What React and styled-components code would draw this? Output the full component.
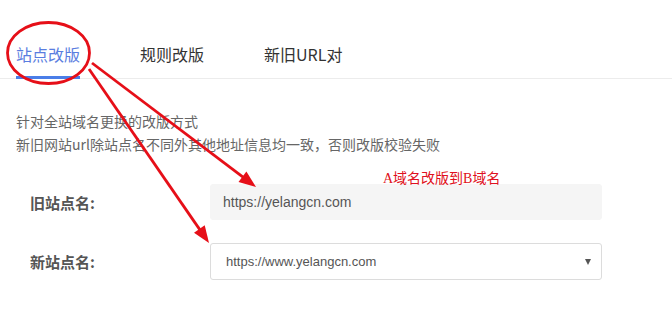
import React from "react";
import styled, { createGlobalStyle } from "styled-components";

const Global = createGlobalStyle`
  html, body { margin: 0; padding: 0; background: #fff; }
  body { font-family: "Noto Sans CJK SC", "Noto Sans", sans-serif; }
  * { box-sizing: border-box; }
`;

const Page = styled.div`
  position: relative;
  width: 672px;
  height: 325px;
  overflow: hidden;
  background: #fff;
`;

const TabBar = styled.div`
  display: flex;
  gap: 60px;
  height: 79px;
  padding-left: 16px;
  border-bottom: 1px solid #ececec;
`;

const Tab = styled.div`
  display: flex;
  align-items: flex-end;
  padding-bottom: 11px;
  font-size: 16px;
  line-height: 22px;
  color: ${(p) => (p.$active ? "#5a7de0" : "#333")};
  border-bottom: 3px solid ${(p) => (p.$active ? "#4a7ee8" : "transparent")};
  margin-bottom: -1px;
`;

const Intro = styled.div`
  padding: 31px 0 0 16px;
  font-size: 14px;
  line-height: 23px;
  color: #666;
`;

const Form = styled.div`
  display: grid;
  grid-template-columns: 180px 392px;
  row-gap: 23px;
  align-items: center;
  padding: 28px 0 0 30px;
`;

const Label = styled.div`
  font-size: 15px;
  font-weight: 700;
  color: #555;
`;

const Field = styled.div`
  display: flex;
  align-items: center;
  justify-content: space-between;
  height: ${(p) => (p.$select ? "37px" : "36px")};
  padding-left: ${(p) => (p.$select ? "15px" : "12px")};
  padding-right: 10px;
  background: ${(p) => (p.$select ? "#fff" : "#f5f5f5")};
  border: 1px solid ${(p) => (p.$select ? "#dcdcdc" : "#f5f5f5")};
  border-radius: 3px;
  font-family: "Liberation Sans", Arial, sans-serif;
  font-size: ${(p) => (p.$select ? "13px" : "14px")};
  color: #555;
`;

const Caret = styled.span`
  width: 0;
  height: 0;
  border-left: 3.5px solid transparent;
  border-right: 3.5px solid transparent;
  border-top: 6px solid #555;
  margin-top: 1px;
`;

const Note = styled.div`
  position: absolute;
  left: 383px;
  top: 169px;
  font-family: "Liberation Serif", "Noto Sans CJK SC", serif;
  font-size: 14px;
  line-height: 20px;
  color: #e01020;
`;

const Overlay = styled.svg`
  position: absolute;
  left: 0;
  top: 0;
  pointer-events: none;
`;

function Arrow({ x1, y1, x2, y2 }) {
  const dx = x2 - x1;
  const dy = y2 - y1;
  const len = Math.hypot(dx, dy);
  const ux = dx / len;
  const uy = dy / len;
  const nx = -uy;
  const ny = ux;
  const hl = 17;
  const hw = 6.5;
  const bx = x2 - hl * ux;
  const by = y2 - hl * uy;
  const pts = `${x2},${y2} ${bx + hw * nx},${by + hw * ny} ${bx - hw * nx},${by - hw * ny}`;
  return (
    <g>
      <line x1={x1} y1={y1} x2={bx + ux * 2} y2={by + uy * 2} stroke="#e60f18" strokeWidth="2.8" />
      <polygon points={pts} fill="#e60f18" />
    </g>
  );
}

export default function App() {
  return (
    <>
      <Global />
      <Page>
        <TabBar>
          <Tab $active>站点改版</Tab>
          <Tab>规则改版</Tab>
          <Tab>新旧URL对</Tab>
        </TabBar>
        <Intro>
          <div>针对全站域名更换的改版方式</div>
          <div>新旧网站url除站点名不同外其他地址信息均一致，否则改版校验失败</div>
        </Intro>
        <Form>
          <Label>旧站点名:</Label>
          <Field>https://yelangcn.com</Field>
          <Label>新站点名:</Label>
          <Field $select>
            <span>https://www.yelangcn.com</span>
            <Caret />
          </Field>
        </Form>
        <Note>A域名改版到B域名</Note>
        <Overlay width="672" height="325" viewBox="0 0 672 325">
          <ellipse cx="48.5" cy="53" rx="41" ry="30.5" fill="none" stroke="#e60f18" strokeWidth="2.8" />
          <Arrow x1={92} y1={63} x2={256} y2={187} />
          <Arrow x1={89} y1={69} x2={209} y2={243} />
        </Overlay>
      </Page>
    </>
  );
}
